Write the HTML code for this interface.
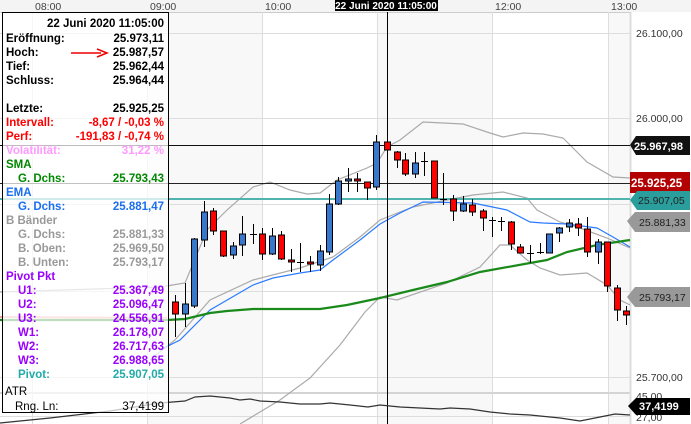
<!DOCTYPE html>
<html><head><meta charset="utf-8"><style>
body{margin:0;width:691px;height:424px;overflow:hidden;background:#fff;font-family:"Liberation Sans",sans-serif;position:relative}
svg{position:absolute;left:0;top:0}
#box{position:absolute;left:2px;top:12px;width:165px;height:399px;border:1px solid #000;background:rgba(255,255,255,0.72);font-size:11.5px;font-weight:bold}
.r{position:absolute;left:3px;right:4px;height:14px;line-height:14px}
.r span{float:right}
.i{padding-left:12px}
</style></head><body>
<svg width="691" height="424" viewBox="0 0 691 424">
<rect x="0" y="0" width="691" height="424" fill="#fff"/>
<rect x="147" y="12" width="115" height="412" fill="#f8f8f8"/>
<rect x="377" y="12" width="115" height="412" fill="#f8f8f8"/>
<rect x="608" y="12" width="22" height="412" fill="#f8f8f8"/>
<rect x="0" y="0" width="691" height="12" fill="#f4f4f4"/>
<line x1="0" y1="12.5" x2="630" y2="12.5" stroke="#ccc"/>
<g font-size="10.5" fill="#444">
<text x="35" y="10">08:00</text><text x="150" y="10">09:00</text><text x="265" y="10">10:00</text><text x="495" y="10">12:00</text><text x="611" y="10">13:00</text>
</g>
<g stroke="#ddd" stroke-width="1">
<line x1="32.5" y1="12" x2="32.5" y2="424"/><line x1="147.5" y1="12" x2="147.5" y2="424"/><line x1="262.5" y1="12" x2="262.5" y2="424"/><line x1="377.5" y1="12" x2="377.5" y2="424"/><line x1="492.5" y1="12" x2="492.5" y2="424"/><line x1="608.5" y1="12" x2="608.5" y2="424"/>
<line x1="0" y1="33.5" x2="630" y2="33.5"/><line x1="0" y1="118.5" x2="630" y2="118.5"/><line x1="0" y1="204.5" x2="630" y2="204.5"/><line x1="0" y1="291.5" x2="630" y2="291.5"/><line x1="0" y1="377.5" x2="630" y2="377.5"/>
<line x1="0" y1="416.5" x2="630" y2="416.5"/>
</g>
<rect x="0" y="392" width="691" height="2" fill="#d4d4d4"/>
<rect x="630" y="12" width="61" height="412" fill="#fff"/>
<line x1="630.5" y1="12" x2="630.5" y2="424" stroke="#ddd" stroke-width="2"/>
<g font-size="10.5" fill="#333">
<text x="636" y="37">26.100,00</text><text x="636" y="122">26.000,00</text><text x="636" y="381">25.700,00</text><text x="636" y="400">45,00</text><text x="636" y="421">27,00</text>
</g>
<g fill="none" stroke-width="1.2">
<polyline stroke="#aaa" points="0,292 160,287 185,283 207,230 227,210 253,187 270,182 290,190 307,194 320,193 337,180 367,168 377,163 387,147 400,140 423,122 463,124 490,133 503,137 523,133 543,134 563,138 587,162 613,177 630,178"/>
<polyline stroke="#aaa" points="150,360 175,340 210,300 253,280 300,268 333,257 360,237 380,220 400,212 413,207 447,200 473,195 503,192 527,198 537,210 560,222 580,228 607,238 630,248"/>
<polyline stroke="#aaa" points="240,424 280,400 310,378 340,345 365,312 380,297 397,300 447,283 480,267 500,245 510,245 527,260 540,268 560,275 587,273 607,285 620,300 630,305"/>
<polyline stroke="#2a7bff" points="160,350 180,340 210,310 253,285 273,278 300,273 320,270 333,260 360,240 380,224 400,213 423,202 473,203 507,210 530,222 543,223 567,224 597,228 613,237 630,247"/>
<polyline stroke="#1a8a1a" stroke-width="2.2" points="0,320 167,320 185,319 210,313 227,311 253,309 320,309 347,305 380,298 413,290 447,282 480,272 530,263 547,260 567,252 597,245 630,240"/>
<polyline stroke="#f4a0a0" stroke-width="2" points="0,317 167,318"/>
</g>
<line x1="0" y1="145.5" x2="630" y2="145.5" stroke="#111"/>
<line x1="0" y1="183.5" x2="630" y2="183.5" stroke="#222"/>
<line x1="0" y1="199" x2="630" y2="199" stroke="#4fb3b0" stroke-width="2"/>
<line x1="387.5" y1="12" x2="387.5" y2="424" stroke="#000"/>
<g stroke="#000" stroke-width="1">
<line x1="175.5" y1="295" x2="175.5" y2="337"/><rect x="172.5" y="302" width="6" height="12" fill="#f00"/>
<line x1="185.5" y1="283" x2="185.5" y2="327"/><rect x="182.5" y="304" width="6" height="10" fill="#3877cc"/>
<line x1="194.5" y1="238" x2="194.5" y2="308"/><rect x="191.5" y="239" width="6" height="67" fill="#3877cc"/>
<line x1="204.5" y1="201" x2="204.5" y2="247"/><rect x="201.5" y="212" width="6" height="28" fill="#3877cc"/>
<line x1="213.5" y1="208" x2="213.5" y2="235"/><rect x="210.5" y="211" width="6" height="20" fill="#f00"/>
<line x1="223.5" y1="231" x2="223.5" y2="257"/><rect x="220.5" y="231" width="6" height="25" fill="#f00"/>
<line x1="233.5" y1="242" x2="233.5" y2="259"/><rect x="230.5" y="246" width="6" height="9" fill="#3877cc"/>
<line x1="242.5" y1="216" x2="242.5" y2="256"/><rect x="239.5" y="234" width="6" height="11" fill="#3877cc"/>
<line x1="253.5" y1="224" x2="253.5" y2="244"/><line x1="250" y1="234.5" x2="257" y2="234.5"/>
<line x1="262.5" y1="228" x2="262.5" y2="260"/><rect x="259.5" y="234" width="6" height="20" fill="#f00"/>
<line x1="272.5" y1="228" x2="272.5" y2="255"/><rect x="269.5" y="236" width="6" height="18" fill="#3877cc"/>
<line x1="281.5" y1="231" x2="281.5" y2="260"/><rect x="278.5" y="235" width="6" height="24" fill="#f00"/>
<line x1="291.5" y1="249" x2="291.5" y2="272"/><rect x="288.5" y="260" width="6" height="2" fill="#f00"/>
<line x1="300.5" y1="243" x2="300.5" y2="272"/><line x1="297" y1="262.5" x2="304" y2="262.5"/>
<line x1="310.5" y1="256" x2="310.5" y2="272"/><rect x="307.5" y="262" width="6" height="2" fill="#f00"/>
<line x1="320.5" y1="245" x2="320.5" y2="271"/><rect x="317.5" y="251" width="6" height="14" fill="#3877cc"/>
<line x1="329.5" y1="194" x2="329.5" y2="255"/><rect x="326.5" y="204" width="6" height="48" fill="#3877cc"/>
<line x1="338.5" y1="177" x2="338.5" y2="205"/><rect x="335.5" y="181" width="6" height="23" fill="#3877cc"/>
<line x1="348.5" y1="168" x2="348.5" y2="192"/><rect x="345.5" y="179" width="6" height="2" fill="#3877cc"/>
<line x1="357.5" y1="173" x2="357.5" y2="192"/><rect x="354.5" y="179" width="6" height="2" fill="#f00"/>
<line x1="367.5" y1="182" x2="367.5" y2="200"/><rect x="364.5" y="182" width="6" height="6" fill="#f00"/>
<line x1="376.5" y1="135" x2="376.5" y2="190"/><rect x="373.5" y="142" width="6" height="45" fill="#3877cc"/>
<rect x="384.5" y="142" width="6" height="8" fill="#f00"/>
<line x1="397.5" y1="151" x2="397.5" y2="168"/><rect x="394.5" y="152" width="6" height="8" fill="#f00"/>
<line x1="405.5" y1="153" x2="405.5" y2="176"/><rect x="402.5" y="160" width="6" height="14" fill="#f00"/>
<line x1="415.5" y1="152" x2="415.5" y2="178"/><rect x="412.5" y="163" width="6" height="11" fill="#3877cc"/>
<line x1="424.5" y1="152" x2="424.5" y2="176"/><line x1="421" y1="161.5" x2="428" y2="161.5"/>
<rect x="431.5" y="161" width="6" height="37" fill="#f00"/>
<line x1="443.5" y1="173" x2="443.5" y2="205"/><line x1="440" y1="199.5" x2="447" y2="199.5"/>
<line x1="453.5" y1="195" x2="453.5" y2="221"/><rect x="450.5" y="199" width="6" height="12" fill="#f00"/>
<line x1="463.5" y1="196" x2="463.5" y2="212"/><rect x="460.5" y="204" width="6" height="7" fill="#3877cc"/>
<line x1="472.5" y1="199" x2="472.5" y2="216"/><rect x="469.5" y="205" width="6" height="7" fill="#f00"/>
<line x1="483.5" y1="209" x2="483.5" y2="231"/><rect x="480.5" y="211" width="6" height="7" fill="#f00"/>
<line x1="492.5" y1="217" x2="492.5" y2="237"/><line x1="489" y1="220.5" x2="496" y2="220.5"/>
<line x1="501.5" y1="217" x2="501.5" y2="231"/><line x1="498" y1="221.5" x2="505" y2="221.5"/>
<line x1="511.5" y1="221" x2="511.5" y2="250"/><rect x="508.5" y="222" width="6" height="22" fill="#f00"/>
<line x1="520.5" y1="244" x2="520.5" y2="253"/><rect x="517.5" y="247" width="6" height="6" fill="#f00"/>
<line x1="530.5" y1="245" x2="530.5" y2="263"/><line x1="527" y1="253.5" x2="534" y2="253.5"/>
<line x1="540.5" y1="243" x2="540.5" y2="254"/><line x1="537" y1="252.5" x2="544" y2="252.5"/>
<rect x="546.5" y="234" width="6" height="19" fill="#3877cc"/>
<line x1="559.5" y1="227" x2="559.5" y2="242"/><rect x="556.5" y="228" width="6" height="5" fill="#3877cc"/>
<line x1="569.5" y1="219" x2="569.5" y2="232"/><rect x="566.5" y="223" width="6" height="4" fill="#3877cc"/>
<line x1="578.5" y1="218" x2="578.5" y2="236"/><rect x="575.5" y="224" width="6" height="4" fill="#f00"/>
<line x1="587.5" y1="217" x2="587.5" y2="257"/><rect x="584.5" y="229" width="6" height="23" fill="#f00"/>
<line x1="598.5" y1="239" x2="598.5" y2="264"/><rect x="595.5" y="242" width="6" height="10" fill="#3877cc"/>
<line x1="607.5" y1="242" x2="607.5" y2="292"/><rect x="604.5" y="242" width="6" height="44" fill="#f00"/>
<line x1="617.5" y1="285" x2="617.5" y2="321"/><rect x="614.5" y="288" width="6" height="22" fill="#f00"/>
<line x1="626.5" y1="306" x2="626.5" y2="325"/><rect x="623.5" y="311" width="6" height="4" fill="#f00"/>
</g>
<polyline fill="none" stroke="#333" stroke-width="1.2" points="0,423 50,418 110,411 160,403 185,401 195,397 210,396 230,398 240,400 250,399 260,401 280,402 300,404 320,404 330,403 350,405 368,407 380,405 400,407 420,408 440,409 450,408 470,409 490,412 510,414 530,415 560,418 580,421 600,417 615,414 630,415"/>
<rect x="335" y="0" width="103" height="11" fill="#000"/>
<text x="386" y="9" font-size="10" font-weight="bold" fill="#fff" text-anchor="middle">22 Juni 2020 11:05:00</text>
<path d="M630,145 L636,136 H690 V155 H636 Z" fill="#111"/>
<text x="634" y="150" font-size="11" font-weight="bold" fill="#fff">25.967,98</text>
<rect x="630" y="172" width="60" height="21" fill="#b30000"/>
<text x="631" y="187" font-size="11.5" font-weight="bold" fill="#fff">25.925,25</text>
<path d="M630,200 L637,191 H690 V210 H637 Z" fill="#2a9e9c"/>
<text x="638" y="204" font-size="10.5" fill="#222">25.907,05</text>
<path d="M627,221 L635,212 H690 V232 H635 Z" fill="#999"/>
<text x="639" y="226" font-size="10.5" fill="#222">25.881,33</text>
<path d="M627,297 L635,287 H690 V307 H635 Z" fill="#999"/>
<text x="639" y="301" font-size="10.5" fill="#222">25.793,17</text>
<path d="M628,406 L636,398 H690 V415 H636 Z" fill="#000"/>
<text x="639" y="410" font-size="11" font-weight="bold" fill="#fff">37,4199</text>
</svg>
<div id="box">
<div class="r" style="top:4px"><span>22 Juni 2020 11:05:00</span></div>
<div class="r" style="top:19px">Eröffnung:<span>25.973,11</span></div>
<div class="r" style="top:33px">Hoch:<span>25.987,57</span></div>
<div class="r" style="top:47px">Tief:<span>25.962,44</span></div>
<div class="r" style="top:61px">Schluss:<span>25.964,44</span></div>
<div class="r" style="top:89px">Letzte:<span>25.925,25</span></div>
<div class="r" style="top:103px;color:#f00">Intervall:<span>-8,67 / -0,03 %</span></div>
<div class="r" style="top:117px;color:#f00">Perf:<span>-191,83 / -0,74 %</span></div>
<div class="r" style="top:131px;color:#f9f">Volatilität:<span>31,22 %</span></div>
<div class="r" style="top:145px;color:#080">SMA</div>
<div class="r i" style="top:159px;color:#080">G. Dchs:<span>25.793,43</span></div>
<div class="r" style="top:173px;color:#1a6ff0">EMA</div>
<div class="r i" style="top:187px;color:#1a6ff0">G. Dchs:<span>25.881,47</span></div>
<div class="r" style="top:201px;color:#999">B Bänder</div>
<div class="r i" style="top:215px;color:#999">G. Dchs:<span>25.881,33</span></div>
<div class="r i" style="top:229px;color:#999">B. Oben:<span>25.969,50</span></div>
<div class="r i" style="top:243px;color:#999">B. Unten:<span>25.793,17</span></div>
<div class="r" style="top:257px;color:#90f">Pivot Pkt</div>
<div class="r i" style="top:271px;color:#90f">U1:<span>25.367,49</span></div>
<div class="r i" style="top:285px;color:#90f">U2:<span>25.096,47</span></div>
<div class="r i" style="top:299px;color:#90f">U3:<span>24.556,91</span></div>
<div class="r i" style="top:313px;color:#90f">W1:<span>26.178,07</span></div>
<div class="r i" style="top:327px;color:#90f">W2:<span>26.717,63</span></div>
<div class="r i" style="top:341px;color:#90f">W3:<span>26.988,65</span></div>
<div class="r i" style="top:355px;color:#2aa">Pivot:<span>25.907,05</span></div>
<div class="r" style="top:372px;font-weight:normal;left:2px">ATR</div>
<div class="r" style="top:387px;font-weight:normal;left:12px">Rng. Ln:<span>37,4199</span></div>
<svg width="40" height="10" style="left:68px;top:35px" viewBox="0 0 40 10"><path d="M0,5 H30" stroke="#e00" stroke-width="1.5"/><path d="M26,1 L36,5 L26,9" fill="none" stroke="#e00" stroke-width="1.5"/></svg>
</div>
</body></html>
